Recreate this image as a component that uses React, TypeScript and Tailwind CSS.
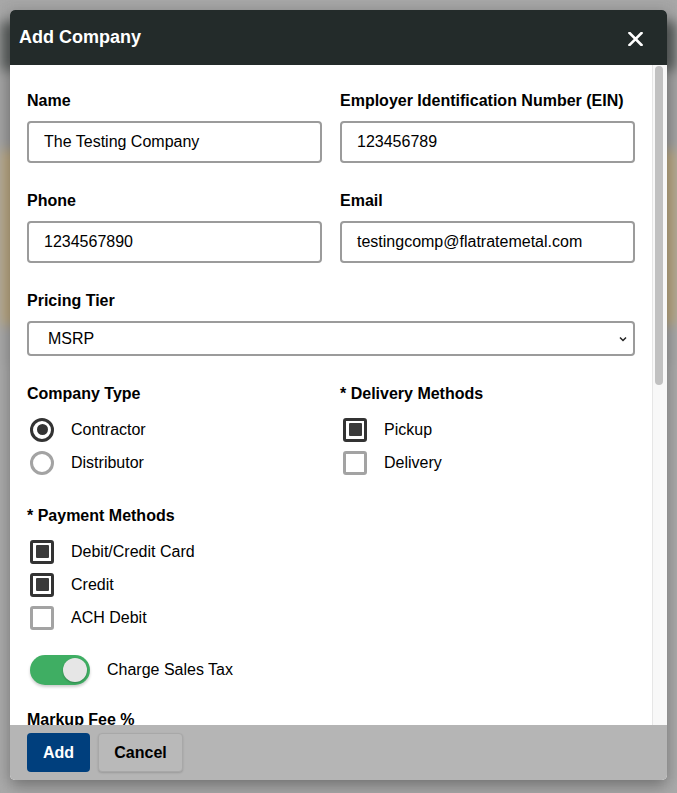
import type { ReactNode } from "react";

const font = { fontFamily: '"Liberation Sans", Arial, Helvetica, sans-serif' };

// ── Form bits ─────────────────────────────────────────────────────────────
function Label({ children }: { children: ReactNode }) {
  return <div className="h-6 text-[16px] font-bold leading-[26px] text-black">{children}</div>;
}

function TextField({ label, value }: { label: string; value: string }) {
  return (
    <div className="flex flex-col">
      <Label>{label}</Label>
      <div className="mt-[9px] flex h-[42px] items-center rounded-[4px] border-2 border-[#9b9b9b] pl-[15px] text-[16px] text-black">
        {value}
      </div>
    </div>
  );
}

function Radio({ checked, label }: { checked?: boolean; label: string }) {
  return (
    <div className="flex h-[33px] items-center">
      <span
        className={
          checked
            ? "ml-[3px] flex h-6 w-6 items-center justify-center rounded-full border-[3px] border-[#333]"
            : "ml-[3px] flex h-6 w-6 items-center justify-center rounded-full border-[3px] border-[#a3a3a3]"
        }
      >
        {checked && <span className="h-[11px] w-[11px] rounded-full bg-[#333]" />}
      </span>
      <span className="ml-[17px] text-[16px] text-black">{label}</span>
    </div>
  );
}

function Check({ checked, label }: { checked?: boolean; label: string }) {
  return (
    <div className="flex h-[33px] items-center">
      <span
        className={
          checked
            ? "ml-[3px] flex h-6 w-6 items-center justify-center rounded-[3px] border-[3px] border-[#333]"
            : "ml-[3px] flex h-6 w-6 items-center justify-center rounded-[3px] border-[3px] border-[#a3a3a3]"
        }
      >
        {checked && <span className="h-[13px] w-[13px] rounded-[1px] bg-[#3a3a3a]" />}
      </span>
      <span className="ml-[17px] text-[16px] text-black">{label}</span>
    </div>
  );
}

// ── Page ──────────────────────────────────────────────────────────────────
export default function App() {
  return (
    <div className="relative h-[793px] w-[677px] overflow-hidden bg-[#a9a9a9]" style={font}>
      {/* blurred page behind the modal */}
      <div className="flex flex-col blur-[6px]">
        <div className="h-[22px] bg-[#a4a4a4]" />
        <div className="h-[48px] bg-[#5f6362]" />
        <div className="h-[80px] bg-[#9f9f9f]" />
        <div className="h-[175px] bg-[#bca983]" />
        <div className="h-[40px] bg-[#a8a8a8]" />
        <div className="h-[428px] bg-[#acacac]" />
      </div>

      <div className="absolute left-[10px] top-[10px] flex h-[770px] w-[657px] flex-col overflow-hidden rounded-[5px] bg-white shadow-[0_6px_16px_rgba(0,0,0,0.35)]">
        {/* header */}
        <div className="flex h-[55px] shrink-0 items-center justify-between bg-[#232b2a] pl-[9px] pr-[24px]">
          <span className="text-[18px] font-bold text-white">Add Company</span>
          <svg width="15" height="14" viewBox="0 0 15 14" className="mt-[2px]">
            <path d="M1.5 1 L13.5 13 M13.5 1 L1.5 13" stroke="#fff" strokeWidth="2.6" strokeLinecap="square" />
          </svg>
        </div>

        {/* body */}
        <div className="flex min-h-0 flex-1">
          <div className="flex-1 overflow-hidden px-[17px] pt-[23px]">
            <div className="grid grid-cols-2 gap-x-[18px] gap-y-[25px]">
              <TextField label="Name" value="The Testing Company" />
              <TextField label="Employer Identification Number (EIN)" value="123456789" />
              <TextField label="Phone" value="1234567890" />
              <TextField label="Email" value="testingcomp@flatratemetal.com" />
            </div>

            <div className="mt-[25px]">
              <Label>Pricing Tier</Label>
              <div className="mt-[9px] flex h-[35px] items-center justify-between rounded-[4px] border-2 border-[#9b9b9b] pl-[19px] pr-[6px] text-[16px] text-black">
                <span>MSRP</span>
                <svg width="8" height="6" viewBox="0 0 8 6">
                  <path d="M1 1.5 L4 4.5 L7 1.5" fill="none" stroke="#222" strokeWidth="1.5" />
                </svg>
              </div>
            </div>

            <div className="mt-[25px] grid grid-cols-2 gap-x-[18px]">
              <div>
                <Label>Company Type</Label>
                <div className="mt-2">
                  <Radio checked label="Contractor" />
                  <Radio label="Distributor" />
                </div>
              </div>
              <div>
                <Label>* Delivery Methods</Label>
                <div className="mt-2">
                  <Check checked label="Pickup" />
                  <Check label="Delivery" />
                </div>
              </div>
            </div>

            <div className="mt-[24px]">
              <Label>* Payment Methods</Label>
              <div className="mt-2">
                <Check checked label="Debit/Credit Card" />
                <Check checked label="Credit" />
                <Check label="ACH Debit" />
              </div>
            </div>

            <div className="mt-[21px] flex h-[30px] items-center">
              <span className="ml-[3px] flex h-[30px] w-[60px] items-center justify-end rounded-full bg-[#3fae63] pr-[3px] shadow-[0_2px_3px_rgba(0,0,0,0.2)]">
                <span className="h-6 w-6 rounded-full bg-[#e6e6e6] shadow-[0_1px_2px_rgba(0,0,0,0.25)]" />
              </span>
              <span className="ml-[17px] text-[16px] text-black">Charge Sales Tax</span>
            </div>

            <div className="mt-[22px]">
              <Label>Markup Fee %</Label>
              <div className="mt-[9px] h-[42px] rounded-[4px] border-2 border-[#9b9b9b]" />
            </div>
          </div>

          {/* scrollbar */}
          <div className="w-[15px] shrink-0 border-l border-[#e6e6e6] bg-[#f8f8f8] pl-[2px] pt-[1px]">
            <div className="h-[319px] w-[8px] rounded-full bg-[#c1c1c1]" />
          </div>
        </div>

        {/* footer */}
        <div className="flex h-[55px] shrink-0 gap-[8px] bg-[#b5b5b5] pl-[17px] pt-[8px]">
          <button className="h-[39px] w-[63px] rounded-[4px] bg-[#003f7d] text-[16px] font-bold text-white">Add</button>
          <button className="h-[39px] w-[85px] rounded-[4px] border border-[#a8a8a8] bg-[#b9b9b9] text-[16px] font-bold text-black shadow-[0_1px_2px_rgba(0,0,0,0.15)]">
            Cancel
          </button>
        </div>
      </div>
    </div>
  );
}
